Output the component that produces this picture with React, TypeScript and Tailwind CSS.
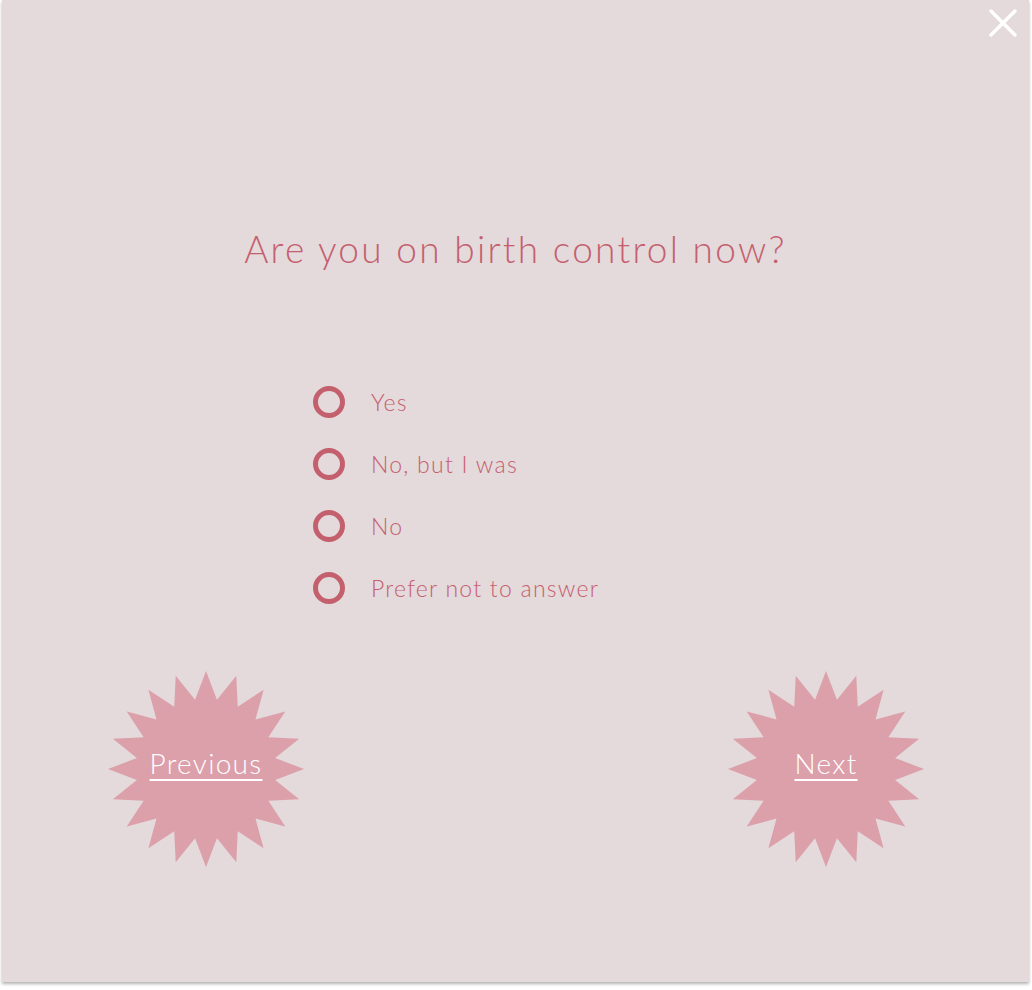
import React from "react";

function starPoints(cx: number, cy: number, R: number, r: number, n: number) {
  const pts: string[] = [];
  for (let i = 0; i < n * 2; i++) {
    const rad = i % 2 === 0 ? R : r;
    const a = (Math.PI * i) / n - Math.PI / 2;
    pts.push(`${(cx + rad * Math.cos(a)).toFixed(2)},${(cy + rad * Math.sin(a)).toFixed(2)}`);
  }
  return pts.join(" ");
}

function Burst({ label }: { label: string }) {
  return (
    <div className="relative w-[198px] h-[198px] flex items-center justify-center">
      <svg className="absolute inset-0" width="198" height="198" viewBox="0 0 198 198">
        <polygon points={starPoints(99, 99, 98, 70, 20)} fill="#dca0ab" />
      </svg>
      <span className="relative text-white text-[28px] font-light tracking-[1.3px] underline underline-offset-[5px] decoration-[2px] mt-[-12px]">
        {label}
      </span>
    </div>
  );
}

const options = ["Yes", "No, but I was", "No", "Prefer not to answer"];

export default function App() {
  return (
    <div className="w-[1032px] h-[990px] bg-white font-['Lato',sans-serif]">
      <div className="relative ml-[2px] w-[1027px] h-[982px] bg-[#e4d9db] shadow-[0_2px_3px_rgba(0,0,0,0.3)] flex flex-col">
        <button className="absolute right-[12px] top-[9px] w-[28px] h-[28px]">
          <svg width="28" height="28" viewBox="0 0 28 28">
            <path d="M2 2 L26 26 M26 2 L2 26" stroke="white" strokeWidth="3.5" strokeLinecap="round" />
          </svg>
        </button>
        <h1 className="mt-[222px] text-center text-[37px] leading-[54px] tracking-[2.3px] text-[#c4606e] font-light">
          Are you on birth control now?
        </h1>
        <div className="mt-[110px] ml-[311px] flex flex-col gap-[30px]">
          {options.map((o) => (
            <div key={o} className="flex items-center h-[32px]">
              <span className="w-[32px] h-[32px] rounded-full border-[5px] border-[#c4606e]" />
              <span className="ml-[26px] text-[23px] tracking-[1.25px] text-[#c4606e] font-light">{o}</span>
            </div>
          ))}
        </div>
        <div className="mt-[66px] flex justify-between pl-[105px] pr-[104px]">
          <Burst label="Previous" />
          <Burst label="Next" />
        </div>
      </div>
    </div>
  );
}
